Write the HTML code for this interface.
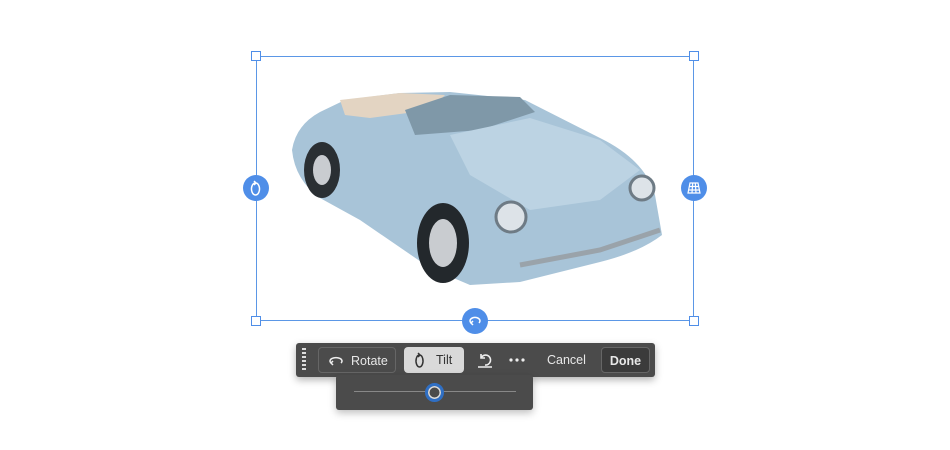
<!DOCTYPE html><html><head><style>
body{margin:0;width:950px;height:450px;background:#fff;position:relative;overflow:hidden;font-family:"Liberation Sans",sans-serif}
.a{position:absolute}
.sq{position:absolute;width:10px;height:10px;background:#fff;border:1px solid #4f8ee8;box-sizing:border-box}
.ci{position:absolute;width:26px;height:26px;border-radius:50%;background:#4f8ee8}
.tb{left:296px;top:343px;width:359px;height:34px;background:#4b4b4b;border-radius:3px;box-shadow:0 3px 8px rgba(0,0,0,.3)}
.btn{position:absolute;top:4px;height:26px;border-radius:4px;color:#e8e8e8;font-size:12.5px;line-height:26px;box-sizing:border-box}
</style></head><body>
<div class="a" style="left:256px;top:56px;width:438px;height:265px;border:1px solid #5b97e6;box-sizing:border-box"></div>
<svg class="a" style="left:280px;top:80px" width="400" height="220" viewBox="280 80 400 220">
<path d="M292 150 Q296 125 320 112 L345 100 L400 93 L450 92 L525 100 L600 138 Q645 160 655 195 L662 235 Q640 252 600 262 L520 282 L470 285 L430 268 L360 220 L320 198 Q295 180 292 150Z" fill="#a8c4d8"/>
<path d="M340 100 L400 93 L445 95 L430 110 L370 118 L345 115Z" fill="#e3d4c2"/>
<path d="M405 110 L450 95 L520 97 L535 112 L480 130 L415 135Z" fill="#7f98a8"/>
<path d="M450 135 L530 118 L600 140 L640 170 L600 200 L530 210 L470 175Z" fill="#bcd3e3"/>
<ellipse cx="322" cy="170" rx="18" ry="28" fill="#2a2f33"/><ellipse cx="322" cy="170" rx="9" ry="15" fill="#c9ccd0"/>
<ellipse cx="443" cy="243" rx="26" ry="40" fill="#23282c"/><ellipse cx="443" cy="243" rx="14" ry="24" fill="#c9ccd0"/>
<circle cx="511" cy="217" r="15" fill="#dde3e8" stroke="#6e7b85" stroke-width="3"/>
<circle cx="642" cy="188" r="12" fill="#dde3e8" stroke="#6e7b85" stroke-width="3"/>
<path d="M520 265 L600 250 L660 230" stroke="#9aa3aa" stroke-width="5" fill="none"/>
</svg>
<div class="sq" style="left:251px;top:51px"></div><div class="sq" style="left:689px;top:51px"></div>
<div class="sq" style="left:251px;top:316px"></div><div class="sq" style="left:689px;top:316px"></div>
<div class="ci" style="left:243px;top:175px"><svg width="26" height="26"><path d="M13 8 a4 6 0 1 1 -1 0 M11 6 l2 2 -2 2" stroke="#fff" stroke-width="1.5" fill="none"/></svg></div>
<div class="ci" style="left:681px;top:175px"><svg width="26" height="26"><path d="M9 8 H17 L19 18 H7Z M8 11.5 H18 M7.5 15 H18.5 M11.7 8 L11 18 M14.3 8 L15 18" stroke="#fff" stroke-width="1.2" fill="none"/></svg></div>
<div class="ci" style="left:462px;top:308px"><svg width="26" height="26"><path d="M9 15 a5 3.5 0 1 1 8 0 M11 13 l-2 2 2 2" stroke="#fff" stroke-width="1.5" fill="none"/></svg></div>
<div class="a tb">
<div class="a" style="left:6px;top:5px;width:4px;height:24px;background:repeating-linear-gradient(#ddd 0 2px,transparent 2px 4px)"></div>
<div class="btn" style="left:22px;width:78px;border:1px solid #666;padding-left:32px"><svg class="a" style="left:8px;top:6px" width="18" height="14"><path d="M4 9 a6 3.5 0 1 1 10 0 M6 7 l-2 2 2 2" stroke="#eee" stroke-width="1.5" fill="none"/></svg>Rotate</div>
<div class="btn" style="left:108px;width:60px;background:#d9d9d9;color:#333;padding-left:32px"><svg class="a" style="left:9px;top:5px" width="14" height="16"><path d="M7 3 a3.5 6 0 1 1 -1 0 M5 1 l2 2 -2 2" stroke="#333" stroke-width="1.5" fill="none"/></svg>Tilt</div>
<svg class="a" style="left:180px;top:8px" width="18" height="18"><path d="M5 7 a5 5 0 1 1 4 7 M5 3 v4 h4 M2 16 h14" stroke="#eee" stroke-width="1.6" fill="none"/></svg>
<svg class="a" style="left:213px;top:15px" width="16" height="4"><circle cx="2" cy="2" r="1.6" fill="#eee"/><circle cx="8" cy="2" r="1.6" fill="#eee"/><circle cx="14" cy="2" r="1.6" fill="#eee"/></svg>
<div class="btn" style="left:251px">Cancel</div>
<div class="btn" style="left:305px;width:49px;background:#3b3b3b;border:1px solid #666;text-align:center;font-weight:bold">Done</div>
</div>
<div class="a" style="left:336px;top:375px;width:197px;height:35px;background:#4b4b4b;border-radius:3px;box-shadow:0 3px 8px rgba(0,0,0,.25)">
<div class="a" style="left:18px;top:16px;width:162px;height:1px;background:#888"></div>
<div class="a" style="left:89px;top:8px;width:13px;height:13px;border-radius:50%;background:#4b4b4b;border:3px solid #2f6fc4;box-shadow:inset 0 0 0 1.5px #ddd"></div>
</div>
</body></html>
